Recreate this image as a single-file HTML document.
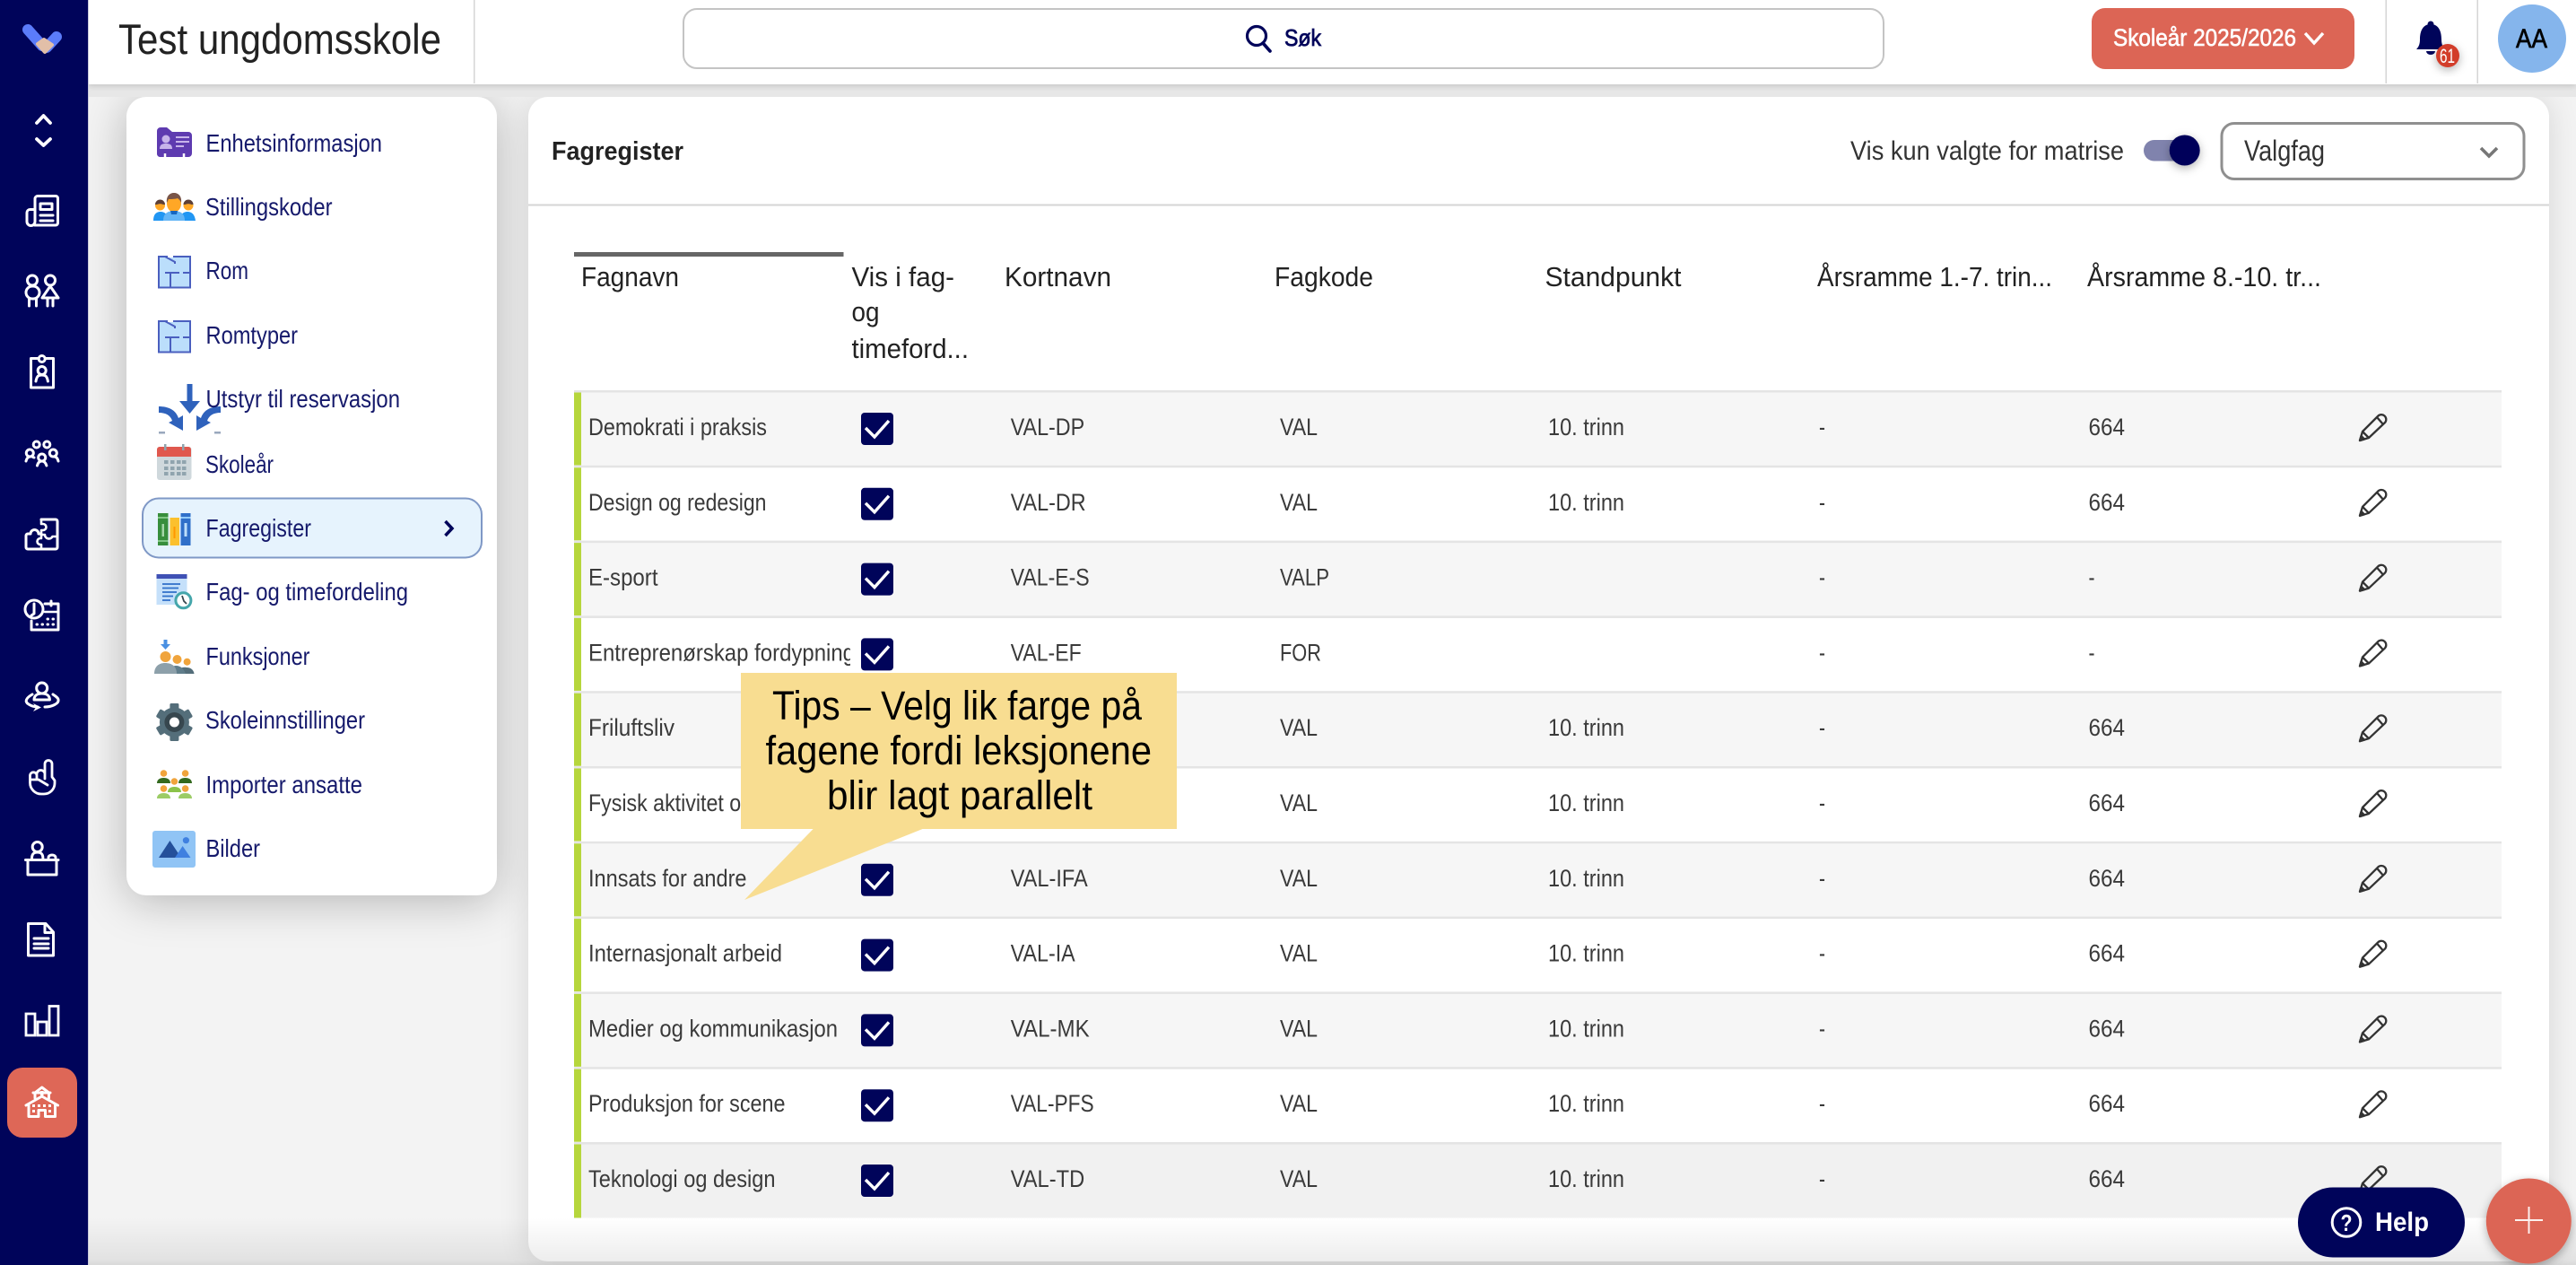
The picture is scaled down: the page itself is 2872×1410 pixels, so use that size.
<!DOCTYPE html>
<html lang="no">
<head>
<meta charset="utf-8">
<title>Fagregister</title>
<style>
html,body{margin:0;padding:0;width:2872px;height:1410px;overflow:hidden;background:#f3f3f3;font-family:"Liberation Sans",sans-serif}
.abs{position:absolute}
svg text{font-family:"Liberation Sans",sans-serif;white-space:pre}
.m{font-size:27.5px;fill:#15196b}
.h{font-size:30.5px;fill:#222}
.r{font-size:27px;fill:#3a3a3a}
.bg1{fill:#f6f6f6}
.sep{fill:#e4e4e4}
.bar{fill:#b6d63c}
.wi{fill:none;stroke:#fff;stroke-width:3;stroke-linecap:round;stroke-linejoin:round}
.wf{fill:#fff}
</style>
</head>
<body>
<div class="abs" style="left:141px;top:108px;width:413px;height:890px;background:#fff;border-radius:22px;box-shadow:0 6px 50px rgba(0,0,0,.26)"></div>
<div class="abs" style="left:589px;top:108px;width:2253px;height:1298px;background:#fff;border-radius:22px;box-shadow:0 0 34px rgba(0,0,0,.12)"></div>
<div class="abs" style="left:98px;top:94px;width:2774px;height:14px;background:#e7e7e7"></div>
<div class="abs" style="left:98px;top:0;width:2774px;height:94px;background:#fff;box-shadow:0 2px 6px rgba(0,0,0,.14)"></div>
<div class="abs" style="left:98px;top:1357px;width:2774px;height:53px;background:linear-gradient(rgba(0,0,0,0),rgba(0,0,0,.07) 90%,rgba(0,0,0,.11))"></div>
<div class="abs" style="left:0;top:0;width:98px;height:1410px;background:#00045a;border-right:1px solid #c9cadb"></div>

<svg class="abs" style="left:0;top:0" width="2872" height="1410" viewBox="0 0 2872 1410" xmlns="http://www.w3.org/2000/svg">
<defs>
<filter id="sh" x="-40%" y="-40%" width="180%" height="180%"><feDropShadow dx="0" dy="3" stdDeviation="5" flood-color="#000" flood-opacity=".3"/></filter>
<clipPath id="c1"><rect x="640" y="0" width="308" height="84"/></clipPath>
<g id="cb"><rect x="960" y="24" width="36" height="36" rx="4" fill="#00045a"/><path d="M965 41 L975 51 L991 33" fill="none" stroke="#fff" stroke-width="3.4"/></g>
<g id="pen" fill="none" stroke="#333" stroke-width="2.3" stroke-linejoin="round"><path d="M2631 55 L2634 45 L2651 28 a4.6 4.6 0 0 1 8 7 L2641 52 Z"/><path d="M2634 45 L2641 52"/><path d="M2650 29 L2657 37"/><path d="M2631 55 L2632.5 50 L2636 53.500 Z" fill="#333"/></g>
</defs>

<!-- header -->
<rect x="528" y="0" width="1.500" height="93" fill="#d5d5d5"/>
<text x="132" y="60" font-size="47" fill="#222" textLength="360" lengthAdjust="spacingAndGlyphs">Test ungdomsskole</text>
<rect x="762" y="10" width="1338" height="66" rx="15" fill="#fff" stroke="#c4c4c4" stroke-width="2"/>
<circle cx="1401" cy="40" r="10.500" fill="none" stroke="#00045a" stroke-width="3.200"/>
<path d="M1408 48 L1416 57" stroke="#00045a" stroke-width="3.600" stroke-linecap="round"/>
<text x="1432" y="51" font-size="26" fill="#00045a" stroke="#00045a" stroke-width=".8" textLength="41" lengthAdjust="spacingAndGlyphs">Søk</text>
<rect x="2332" y="9" width="293" height="68" rx="15" fill="#dc6555"/>
<text x="2356" y="51" font-size="26.500" fill="#fff" stroke="#fff" stroke-width=".6" textLength="204" lengthAdjust="spacingAndGlyphs">Skoleår 2025/2026</text>
<path d="M2570 37 L2580 48 L2590 37" fill="none" stroke="#fff" stroke-width="3.400"/>
<rect x="2659.500" y="0" width="1.500" height="93" fill="#d5d5d5"/>
<rect x="2761.500" y="0" width="1.500" height="93" fill="#d5d5d5"/>
<circle cx="2710" cy="27" r="3.500" fill="#00045a"/>
<path d="M2710 27 c-9 0-12 8-12 17 c0 6-2 9-4 11 h32 c-2-2-4-5-4-11 c0-9-3-17-12-17z" fill="#00045a"/>
<path d="M2705 57 h10 a5 4 0 0 1-10 0z" fill="#00045a"/>
<rect x="2716" y="49" width="26" height="26" rx="13" fill="#d23c2c" filter="url(#sh)"/>
<text x="2720" y="70" font-size="22" fill="#fff" textLength="17" lengthAdjust="spacingAndGlyphs">61</text>
<circle cx="2823" cy="43" r="38" fill="#85b5ec"/>
<text x="2805" y="53" font-size="30" fill="#000" stroke="#000" stroke-width=".7" textLength="35" lengthAdjust="spacingAndGlyphs">AA</text>

<!-- sidebar icons -->
<g fill="none" stroke-linecap="round" stroke-linejoin="round">
<path d="M31 33 L47 51" stroke="#5b7cfa" stroke-width="12"/>
<path d="M63 41 L52 53" stroke="#5b7cfa" stroke-width="12"/>
<path d="M42 49 L49 44 L58 50 L50 58 Z" fill="#e2bfa8" stroke="#e2bfa8" stroke-width="4"/>
</g>
<path d="M41 137 L48.500 129 L56 137 M41 155 L48.500 162 L56 155" fill="none" stroke="#fff" stroke-width="3.800" stroke-linecap="round" stroke-linejoin="round"/>
<g class="wi">
<path d="M38.500 251 H62 a2.500 2.500 0 0 0 2.500-2.500 V221 a2.500 2.500 0 0 0-2.500-2.500 H42 a3 3 0 0 0-3 3 V247 a4.500 4.500 0 0 1-9 0 V237 a3.500 3.500 0 0 1 3.500-3.500 H39"/>
<rect x="45" y="227" width="13" height="6.500"/><path d="M45 240 H59 M45 246 H59"/>
<circle cx="36" cy="312.500" r="5.500"/><rect x="29" y="319" width="15" height="14" rx="7"/><path d="M32.500 333 V341 M40.500 333 V341"/>
<circle cx="56" cy="312.500" r="5.500"/><path d="M56 319 L65 332 H47 Z"/><path d="M53 332 V341 M59 332 V341"/>
<path d="M42 399.500 H34.500 V432 H59.500 V399.500 H51"/><circle cx="46.700" cy="400" r="3.500"/><circle cx="46.700" cy="413" r="4.500"/><path d="M40 425 c1-6 3-7 6.700-7 s5.700 1 6.700 7"/>
<circle cx="40.700" cy="495.500" r="3.500"/><circle cx="52.300" cy="495.500" r="3.500"/><circle cx="33.300" cy="505" r="4"/><circle cx="59.300" cy="505" r="4"/><circle cx="46.700" cy="510" r="4"/>
<path d="M29 514 c1-4 3-5 4.500-5 M38 510 c-1 0-2-1-2-1 M65 514 c-1-4-3-5-4.500-5 M41.500 519 c1-4 3-5 5.200-5 s4 1 5.200 5"/>
<path d="M46 579 H62 a2 2 0 0 1 2 2 V610 a2 2 0 0 1-2 2 H31 a2 2 0 0 1-2-2 V597 a2 2 0 0 1 2-2 H34 a4.500 4.500 0 1 1 9 0 H46"/>
<path d="M46 579 V584 h2 a3.500 3.500 0 0 1 0 7 h-2 V600 h-1 a3.500 3.500 0 0 0 0 7 h1 V612 M46 596 H50 a4.500 4.500 0 0 0 8.500 2 H64" stroke-width="2.600"/>
<circle cx="38" cy="679" r="10"/><path d="M38 673 V684 L35 686"/>
<path d="M50 673 H65 V702 H35 V692"/><path d="M50 682 H65" stroke-width="2.500"/><path d="M57 670 V675"/>
<path d="M41 696 h.5 M47 696 h.5 M53 696 h.5 M59 696 h.5 M53 690 h.5 M59 690 h.5"/>
<circle cx="46.700" cy="767" r="6"/><path d="M38 780 c0-5 4-7 8.700-7 s8.700 2 8.700 7 Z"/>
<path d="M36 774 C29 778 27 782 32 785 C35 787 39 788 42 788"/>
<path d="M50 788 C58 788 66 784 65 780 C65 778 62 776 59 774"/>
<path d="M50 868 V851.500 a4 4 0 0 1 8 0 V866 l3 4 v3 a12 12 0 0 1-12 12 h-3 a12.500 12.500 0 0 1-12.500-12.500 V864 a3.800 3.800 0 0 1 7.500 0 V868 M41 863 a4.500 4.500 0 0 1 9 0 M33.500 869 H43 L53 875" stroke-width="2.800"/>
<circle cx="41.700" cy="944" r="5.500"/><path d="M35.500 957 c0-5 2-7 6.200-7 s6.200 2 6.200 7"/><path d="M54 956 c0-4 8-4 8 0"/>
<path d="M28.500 958.500 H65 M31 958.500 V975 H63 V958.500"/>
<path d="M31.500 1029.500 H51 L59.500 1039 V1065 H31.500 Z M50 1030 V1039.500 H59"/><path d="M38 1046 H54 M38 1052 H54 M38 1057 H54"/>
</g>
<path d="M37 784 L46 788.500 L37 793 L40 788.500 Z" fill="#fff"/>
<g fill="none" stroke="#fff" stroke-width="2.800"><rect x="29" y="1130" width="10" height="24"/><rect x="42" y="1139" width="10" height="15"/><rect x="55" y="1121.500" width="10" height="32.500"/></g>
<rect x="8" y="1190" width="78" height="78" rx="17" fill="#de6757"/>
<g class="wi" stroke-width="2.800"><path d="M29 1232 L46.700 1222 L64.500 1232"/><path d="M39 1224 V1218 L46.700 1212 L54.500 1218 V1224"/><path d="M37 1218 H56"/><path d="M32 1232 V1244.500 H43 V1237.500 H50.500 V1244.500 H61.500 V1232"/></g>
<g class="wf"><rect x="45" y="1216" width="3.500" height="5"/><rect x="36" y="1231" width="3" height="3"/><rect x="42" y="1231" width="3" height="3"/><rect x="48" y="1231" width="3" height="3"/><rect x="54" y="1231" width="3" height="3"/><rect x="36" y="1237" width="3" height="3"/><rect x="54" y="1237" width="3" height="3"/></g>

<!-- left menu selected -->
<rect x="159" y="555.500" width="378" height="66" rx="18" fill="#e6f3fd" stroke="#7f98c6" stroke-width="2"/>
<path d="M496.500 581 L504 589 L496.500 597" fill="none" stroke="#00045a" stroke-width="3.500"/>

<!-- menu icons -->
<path d="M175 146 a4 4 0 0 1 4-4 H186 L192 147 H210 a4 4 0 0 1 4 4 V171 a4 4 0 0 1-4 4 H178 a4 4 0 0 1-3-3 Z" fill="#5e3bb0"/>
<circle cx="185" cy="155" r="4.500" fill="#c7b4ea"/><path d="M178 166 c0-5 3-6 7-6 s7 1 7 6z" fill="#c7b4ea"/>
<path d="M196 153 H211 M196 158 H211 M196 163 H205" stroke="#c7b4ea" stroke-width="2"/>
<path d="M184 171 v5 M205 171 v5" stroke="#fff" stroke-width="2.500"/>

<path d="M171 246 c0-7 3-10 8-10 s8 3 9 10z M200 246 c1-7 4-10 9-10 s8 3 9 10z" fill="#2196f3"/>
<path d="M182 246 c0-8 5-11 12-11 s12 3 12 11 z" fill="#64b5f6"/>
<circle cx="178.500" cy="229" r="5.500" fill="#ffa726"/><circle cx="210" cy="229" r="5.500" fill="#ffa726"/>
<path d="M173 228 a5.500 5.500 0 0 1 11 0 h-2 c-2-1-5-1-7 0z M204.500 228 a5.500 5.500 0 0 1 11 0 h-2 c-2-1-5-1-7 0z" fill="#5d4037"/>
<ellipse cx="194" cy="227" rx="8" ry="9.500" fill="#ffa726"/>
<path d="M186 226 c-1-7 3-11 8-11 s9 4 8 11 c-1-3-3-4-4-5 c-3 1-8 1-10 1z" fill="#795548"/>
<path d="M190 235 h8 l-1 4 h-6z" fill="#1565c0"/>

<g id="room"><rect x="177" y="286" width="35" height="34.500" fill="#bbdefb" stroke="#4a5fbf" stroke-width="2"/>
<path d="M184 286 L195 292 V294 M194 286 H203 M184 304 H200 M204 304 H212 M190 304 V320" fill="none" stroke="#4a5fbf" stroke-width="2"/><rect x="187" y="284" width="6" height="3" fill="#fff"/></g>
<g transform="translate(0,72)"><rect x="177" y="286" width="35" height="34.500" fill="#bbdefb" stroke="#4a5fbf" stroke-width="2"/>
<path d="M184 286 L195 292 V294 M194 286 H203 M184 304 H200 M204 304 H212 M190 304 V320" fill="none" stroke="#4a5fbf" stroke-width="2"/><rect x="187" y="284" width="6" height="3" fill="#fff"/></g>

<path d="M208.500 428 h6 V447 h8.500 L211.500 461 L200 447 h8.500 Z" fill="#2f62bc"/>
<path d="M177 453 v7 c8 0 13 3 15 9 l-4 2 l16 9 l0-17 l-5 3 c-3-9-11-13-22-13z" fill="#2f62bc"/>
<path d="M246 453 v7 c-8 0-13 3-15 9 l4 2 l-16 9 l0-17 l5 3 c3-9 11-13 22-13z" fill="#2f62bc"/>
<rect x="177" y="481" width="7" height="2.500" fill="#9aa8bd"/><rect x="239" y="481" width="7" height="2.500" fill="#9aa8bd"/>

<rect x="175" y="498" width="38.500" height="37" rx="3" fill="#cfd8dc"/>
<path d="M175 509 V501 a3 3 0 0 1 3-3 H210 a3 3 0 0 1 3 3 V509 Z" fill="#e0584e"/>
<rect x="183" y="495" width="2.500" height="7" fill="#90a4ae"/><rect x="203" y="495" width="2.500" height="7" fill="#90a4ae"/>
<g fill="#90a4ae"><rect x="183" y="513" width="4.500" height="4"/><rect x="190" y="513" width="4.500" height="4"/><rect x="197" y="513" width="4.500" height="4"/><rect x="203" y="513" width="4.500" height="4"/><rect x="183" y="520" width="4.500" height="4"/><rect x="190" y="520" width="4.500" height="4"/><rect x="197" y="520" width="4.500" height="4"/><rect x="203" y="520" width="4.500" height="4"/><rect x="183" y="526" width="4.500" height="4"/><rect x="190" y="526" width="4.500" height="4"/><rect x="197" y="526" width="4.500" height="4"/><rect x="203" y="526" width="4.500" height="4"/></g>

<rect x="176" y="572" width="11.500" height="36" fill="#388e3c"/><rect x="180.500" y="584" width="2.500" height="14" fill="#a5d6a7"/><rect x="176" y="576" width="11.500" height="2" fill="#81c784"/><rect x="176" y="602" width="11.500" height="2" fill="#81c784"/>
<rect x="189.500" y="577" width="10.500" height="31" fill="#fbc02d"/><rect x="193.500" y="587" width="2" height="13" fill="#ff9800"/>
<rect x="201.500" y="572" width="11" height="36" fill="#2f6fc9"/><rect x="205.500" y="583" width="3" height="15" fill="#bbdefb"/><rect x="201.500" y="576" width="11" height="2" fill="#90caf9"/>

<rect x="174.500" y="640" width="34" height="34" fill="#c5e0fa"/><rect x="174.500" y="640" width="34" height="5" fill="#3f51b5"/>
<path d="M181 651 H201 M181 655.500 H199 M181 660 H197 M181 664.500 H193 M181 669 H190" stroke="#2f6fc9" stroke-width="1.700"/>
<circle cx="204.400" cy="669.300" r="8.500" fill="#fff" stroke="#45a6ab" stroke-width="3"/><path d="M203 664 L205 670 L208 673" fill="none" stroke="#37474f" stroke-width="1.800"/>

<path d="M182.500 713 h4 V718 h3.500 l-5.500 6 l-5.500-6 h3.500z" fill="#4a90e2"/>
<circle cx="184.500" cy="732" r="6" fill="#f0a43c"/><circle cx="197.500" cy="735" r="5" fill="#f0a43c"/><circle cx="208.600" cy="737.700" r="4" fill="#f0a43c"/>
<path d="M197 751 c1-5 5-8 11-7 c5 0 8 3 8.500 7z" fill="#546e7a"/>
<path d="M187 751 c1-5 5-9 9-9 c6 0 9 4 11 9z" fill="#607d8b"/>
<path d="M172 751 c0-8 5-12 12-12 c8 0 13 4 13 12z" fill="#8da0aa"/>

<g fill="#546e7a" transform="translate(194.400,805)">
<circle r="16.500"/>
<rect x="-5" y="-21" width="10" height="42" rx="1.500"/>
<rect x="-5" y="-21" width="10" height="42" rx="1.500" transform="rotate(60)"/>
<rect x="-5" y="-21" width="10" height="42" rx="1.500" transform="rotate(120)"/>
<circle r="11" fill="#37474f"/><circle r="5.500" fill="#fff"/>
</g>

<g fill="#f0a43c"><circle cx="182.500" cy="862" r="3.800"/><circle cx="206.600" cy="862" r="3.800"/><circle cx="194.400" cy="871" r="3.800"/><circle cx="182.500" cy="879" r="3.800"/><circle cx="206.600" cy="879" r="3.800"/></g>
<path d="M175 873 c0-4 3-6 7.500-6 s7.500 2 7.500 6z M199 873 c0-4 3-6 7.500-6 s7.500 2 7.500 6z" fill="#33691e"/>
<path d="M187 883 c0-4 3-6 7.500-6 s7.500 2 7.500 6z" fill="#8bc34a"/>
<path d="M175 890 c0-4 3-6 7.500-6 s7.500 2 7.500 6z M199 890 c0-4 3-6 7.500-6 s7.500 2 7.500 6z" fill="#9ccc65"/>

<rect x="170" y="926" width="48" height="41" rx="3" fill="#90c4f5"/>
<path d="M177 956 L189.400 937 L202 956 Z" fill="#24509a"/>
<path d="M195 956 L203.600 943 L212.500 956 Z" fill="#3f80e0"/>
<circle cx="207.400" cy="936.700" r="3.600" fill="#3f80e0"/>

<!-- menu text -->
<text class="m" x="229.500" y="169" textLength="196.500" lengthAdjust="spacingAndGlyphs">Enhetsinformasjon</text>
<text class="m" x="229" y="240" textLength="141.500" lengthAdjust="spacingAndGlyphs">Stillingskoder</text>
<text class="m" x="229.500" y="311" textLength="47.500" lengthAdjust="spacingAndGlyphs">Rom</text>
<text class="m" x="229.500" y="383" textLength="102.500" lengthAdjust="spacingAndGlyphs">Romtyper</text>
<text class="m" x="229.500" y="454" textLength="216.500" lengthAdjust="spacingAndGlyphs">Utstyr til reservasjon</text>
<text class="m" x="229" y="527" textLength="76" lengthAdjust="spacingAndGlyphs">Skoleår</text>
<text class="m" x="229.500" y="598" textLength="117.500" lengthAdjust="spacingAndGlyphs">Fagregister</text>
<text class="m" x="229.500" y="669" textLength="225.500" lengthAdjust="spacingAndGlyphs">Fag- og timefordeling</text>
<text class="m" x="229.500" y="741" textLength="116" lengthAdjust="spacingAndGlyphs">Funksjoner</text>
<text class="m" x="229" y="812" textLength="178" lengthAdjust="spacingAndGlyphs">Skoleinnstillinger</text>
<text class="m" x="229.500" y="884" textLength="174.500" lengthAdjust="spacingAndGlyphs">Importer ansatte</text>
<text class="m" x="229.500" y="955" textLength="60.500" lengthAdjust="spacingAndGlyphs">Bilder</text>

<!-- main panel header -->
<text x="615" y="178" font-size="29" font-weight="700" fill="#222" textLength="147" lengthAdjust="spacingAndGlyphs">Fagregister</text>
<text x="2063" y="178" font-size="29.500" fill="#333" textLength="305" lengthAdjust="spacingAndGlyphs">Vis kun valgte for matrise</text>
<rect x="2390" y="156" width="46" height="23.500" rx="11.700" fill="#8083ad"/>
<circle cx="2435.700" cy="167.500" r="17" fill="#00045a" filter="url(#sh)"/>
<rect x="2477" y="137.500" width="337" height="62" rx="14" fill="#fff" stroke="#8f8f8f" stroke-width="3"/>
<text x="2502" y="179" font-size="32" fill="#333" textLength="90" lengthAdjust="spacingAndGlyphs">Valgfag</text>
<path d="M2766 165 L2775 174 L2784 165" fill="none" stroke="#777" stroke-width="3.600"/>
<rect x="589" y="227.500" width="2253" height="2" fill="#d5d5d5"/>

<!-- table header -->
<rect x="640" y="281" width="300.500" height="5" fill="#666"/>
<text class="h" x="648" y="319" textLength="109" lengthAdjust="spacingAndGlyphs">Fagnavn</text>
<text class="h" x="949.500" y="319" textLength="114.500" lengthAdjust="spacingAndGlyphs">Vis i fag-</text>
<text class="h" x="949.500" y="358" textLength="31" lengthAdjust="spacingAndGlyphs">og</text>
<text class="h" x="949.500" y="399" textLength="130.500" lengthAdjust="spacingAndGlyphs">timeford...</text>
<text class="h" x="1120" y="319" textLength="119" lengthAdjust="spacingAndGlyphs">Kortnavn</text>
<text class="h" x="1421" y="319" textLength="110" lengthAdjust="spacingAndGlyphs">Fagkode</text>
<text class="h" x="1722.500" y="319" textLength="152" lengthAdjust="spacingAndGlyphs">Standpunkt</text>
<text class="h" x="2026" y="319" textLength="262" lengthAdjust="spacingAndGlyphs">Årsramme 1.-7. trin...</text>
<text class="h" x="2327" y="319" textLength="261" lengthAdjust="spacingAndGlyphs">Årsramme 8.-10. tr...</text>

<!-- rows -->
<g transform="translate(0,436)"><rect class="bg1" x="640" y="0" width="2149" height="84"/><rect class="sep" x="640" y="-1" width="2149" height="2.500"/><rect class="bar" x="640" y="1.500" width="8" height="81"/>
<text class="r" x="656" y="49" textLength="199" lengthAdjust="spacingAndGlyphs">Demokrati i praksis</text><use href="#cb"/>
<text class="r" x="1126.700" y="49" textLength="82.500" lengthAdjust="spacingAndGlyphs">VAL-DP</text><text class="r" x="1427" y="49" textLength="42" lengthAdjust="spacingAndGlyphs">VAL</text><text class="r" x="1726" y="49" textLength="85" lengthAdjust="spacingAndGlyphs">10. trinn</text><text class="r" x="2028" y="49" textLength="7" lengthAdjust="spacingAndGlyphs">-</text><text class="r" x="2328.500" y="49" textLength="40.500" lengthAdjust="spacingAndGlyphs">664</text><use href="#pen"/></g>

<g transform="translate(0,519.800)"><rect class="sep" x="640" y="-1" width="2149" height="2.500"/><rect class="bar" x="640" y="1.500" width="8" height="81"/>
<text class="r" x="656" y="49" textLength="198.500" lengthAdjust="spacingAndGlyphs">Design og redesign</text><use href="#cb"/>
<text class="r" x="1126.700" y="49" textLength="84" lengthAdjust="spacingAndGlyphs">VAL-DR</text><text class="r" x="1427" y="49" textLength="42" lengthAdjust="spacingAndGlyphs">VAL</text><text class="r" x="1726" y="49" textLength="85" lengthAdjust="spacingAndGlyphs">10. trinn</text><text class="r" x="2028" y="49" textLength="7" lengthAdjust="spacingAndGlyphs">-</text><text class="r" x="2328.500" y="49" textLength="40.500" lengthAdjust="spacingAndGlyphs">664</text><use href="#pen"/></g>

<g transform="translate(0,603.600)"><rect class="bg1" x="640" y="0" width="2149" height="84"/><rect class="sep" x="640" y="-1" width="2149" height="2.500"/><rect class="bar" x="640" y="1.500" width="8" height="81"/>
<text class="r" x="656" y="49" textLength="77.500" lengthAdjust="spacingAndGlyphs">E-sport</text><use href="#cb"/>
<text class="r" x="1126.700" y="49" textLength="88" lengthAdjust="spacingAndGlyphs">VAL-E-S</text><text class="r" x="1427" y="49" textLength="55" lengthAdjust="spacingAndGlyphs">VALP</text><text class="r" x="2028" y="49" textLength="7" lengthAdjust="spacingAndGlyphs">-</text><text class="r" x="2328.500" y="49" textLength="7" lengthAdjust="spacingAndGlyphs">-</text><use href="#pen"/></g>

<g transform="translate(0,687.400)"><rect class="sep" x="640" y="-1" width="2149" height="2.500"/><rect class="bar" x="640" y="1.500" width="8" height="81"/>
<g clip-path="url(#c1)"><text class="r" x="656" y="49" textLength="297" lengthAdjust="spacingAndGlyphs">Entreprenørskap fordypning</text></g><use href="#cb"/>
<text class="r" x="1126.700" y="49" textLength="79" lengthAdjust="spacingAndGlyphs">VAL-EF</text><text class="r" x="1427" y="49" textLength="46" lengthAdjust="spacingAndGlyphs">FOR</text><text class="r" x="2028" y="49" textLength="7" lengthAdjust="spacingAndGlyphs">-</text><text class="r" x="2328.500" y="49" textLength="7" lengthAdjust="spacingAndGlyphs">-</text><use href="#pen"/></g>

<g transform="translate(0,771.200)"><rect class="bg1" x="640" y="0" width="2149" height="84"/><rect class="sep" x="640" y="-1" width="2149" height="2.500"/><rect class="bar" x="640" y="1.500" width="8" height="81"/>
<text class="r" x="656" y="49" textLength="96" lengthAdjust="spacingAndGlyphs">Friluftsliv</text>
<text class="r" x="1427" y="49" textLength="42" lengthAdjust="spacingAndGlyphs">VAL</text><text class="r" x="1726" y="49" textLength="85" lengthAdjust="spacingAndGlyphs">10. trinn</text><text class="r" x="2028" y="49" textLength="7" lengthAdjust="spacingAndGlyphs">-</text><text class="r" x="2328.500" y="49" textLength="40.500" lengthAdjust="spacingAndGlyphs">664</text><use href="#pen"/></g>

<g transform="translate(0,855)"><rect class="sep" x="640" y="-1" width="2149" height="2.500"/><rect class="bar" x="640" y="1.500" width="8" height="81"/>
<text class="r" x="656" y="49" textLength="245" lengthAdjust="spacingAndGlyphs">Fysisk aktivitet og helse</text>
<text class="r" x="1427" y="49" textLength="42" lengthAdjust="spacingAndGlyphs">VAL</text><text class="r" x="1726" y="49" textLength="85" lengthAdjust="spacingAndGlyphs">10. trinn</text><text class="r" x="2028" y="49" textLength="7" lengthAdjust="spacingAndGlyphs">-</text><text class="r" x="2328.500" y="49" textLength="40.500" lengthAdjust="spacingAndGlyphs">664</text><use href="#pen"/></g>

<g transform="translate(0,938.800)"><rect class="bg1" x="640" y="0" width="2149" height="84"/><rect class="sep" x="640" y="-1" width="2149" height="2.500"/><rect class="bar" x="640" y="1.500" width="8" height="81"/>
<text class="r" x="656" y="49" textLength="176.500" lengthAdjust="spacingAndGlyphs">Innsats for andre</text><use href="#cb"/>
<text class="r" x="1126.700" y="49" textLength="86" lengthAdjust="spacingAndGlyphs">VAL-IFA</text><text class="r" x="1427" y="49" textLength="42" lengthAdjust="spacingAndGlyphs">VAL</text><text class="r" x="1726" y="49" textLength="85" lengthAdjust="spacingAndGlyphs">10. trinn</text><text class="r" x="2028" y="49" textLength="7" lengthAdjust="spacingAndGlyphs">-</text><text class="r" x="2328.500" y="49" textLength="40.500" lengthAdjust="spacingAndGlyphs">664</text><use href="#pen"/></g>

<g transform="translate(0,1022.600)"><rect class="sep" x="640" y="-1" width="2149" height="2.500"/><rect class="bar" x="640" y="1.500" width="8" height="81"/>
<text class="r" x="656" y="49" textLength="216" lengthAdjust="spacingAndGlyphs">Internasjonalt arbeid</text><use href="#cb"/>
<text class="r" x="1126.700" y="49" textLength="72" lengthAdjust="spacingAndGlyphs">VAL-IA</text><text class="r" x="1427" y="49" textLength="42" lengthAdjust="spacingAndGlyphs">VAL</text><text class="r" x="1726" y="49" textLength="85" lengthAdjust="spacingAndGlyphs">10. trinn</text><text class="r" x="2028" y="49" textLength="7" lengthAdjust="spacingAndGlyphs">-</text><text class="r" x="2328.500" y="49" textLength="40.500" lengthAdjust="spacingAndGlyphs">664</text><use href="#pen"/></g>

<g transform="translate(0,1106.400)"><rect class="bg1" x="640" y="0" width="2149" height="84"/><rect class="sep" x="640" y="-1" width="2149" height="2.500"/><rect class="bar" x="640" y="1.500" width="8" height="81"/>
<text class="r" x="656" y="49" textLength="278" lengthAdjust="spacingAndGlyphs">Medier og kommunikasjon</text><use href="#cb"/>
<text class="r" x="1126.700" y="49" textLength="88" lengthAdjust="spacingAndGlyphs">VAL-MK</text><text class="r" x="1427" y="49" textLength="42" lengthAdjust="spacingAndGlyphs">VAL</text><text class="r" x="1726" y="49" textLength="85" lengthAdjust="spacingAndGlyphs">10. trinn</text><text class="r" x="2028" y="49" textLength="7" lengthAdjust="spacingAndGlyphs">-</text><text class="r" x="2328.500" y="49" textLength="40.500" lengthAdjust="spacingAndGlyphs">664</text><use href="#pen"/></g>

<g transform="translate(0,1190.200)"><rect class="sep" x="640" y="-1" width="2149" height="2.500"/><rect class="bar" x="640" y="1.500" width="8" height="81"/>
<text class="r" x="656" y="49" textLength="219.500" lengthAdjust="spacingAndGlyphs">Produksjon for scene</text><use href="#cb"/>
<text class="r" x="1126.700" y="49" textLength="93" lengthAdjust="spacingAndGlyphs">VAL-PFS</text><text class="r" x="1427" y="49" textLength="42" lengthAdjust="spacingAndGlyphs">VAL</text><text class="r" x="1726" y="49" textLength="85" lengthAdjust="spacingAndGlyphs">10. trinn</text><text class="r" x="2028" y="49" textLength="7" lengthAdjust="spacingAndGlyphs">-</text><text class="r" x="2328.500" y="49" textLength="40.500" lengthAdjust="spacingAndGlyphs">664</text><use href="#pen"/></g>

<g transform="translate(0,1274)"><rect x="640" y="0" width="2149" height="83.500" fill="#f1f1f1"/><rect class="sep" x="640" y="-1" width="2149" height="2.500"/><rect class="bar" x="640" y="1.500" width="8" height="82"/>
<text class="r" x="656" y="49" textLength="208.500" lengthAdjust="spacingAndGlyphs">Teknologi og design</text><use href="#cb"/>
<text class="r" x="1126.700" y="49" textLength="82.500" lengthAdjust="spacingAndGlyphs">VAL-TD</text><text class="r" x="1427" y="49" textLength="42" lengthAdjust="spacingAndGlyphs">VAL</text><text class="r" x="1726" y="49" textLength="85" lengthAdjust="spacingAndGlyphs">10. trinn</text><text class="r" x="2028" y="49" textLength="7" lengthAdjust="spacingAndGlyphs">-</text><text class="r" x="2328.500" y="49" textLength="40.500" lengthAdjust="spacingAndGlyphs">664</text><use href="#pen"/></g>

<!-- tooltip -->
<path d="M826 750 H1312 V924 H1028.500 L830 1003 L906.600 924 H826 Z" fill="#f8dd91"/>
<text x="861" y="802" font-size="45" fill="#000" textLength="412" lengthAdjust="spacingAndGlyphs">Tips – Velg lik farge på</text>
<text x="853.500" y="852" font-size="45" fill="#000" textLength="430.500" lengthAdjust="spacingAndGlyphs">fagene fordi leksjonene</text>
<text x="922" y="902" font-size="45" fill="#000" textLength="296" lengthAdjust="spacingAndGlyphs">blir lagt parallelt</text>

<!-- floating -->
<rect x="2562" y="1323.500" width="186" height="78" rx="39" fill="#00045a"/>
<circle cx="2616" cy="1362.500" r="15.800" fill="none" stroke="#fff" stroke-width="3"/>
<text x="2609.500" y="1372" font-size="26" font-weight="700" fill="#fff" textLength="13" lengthAdjust="spacingAndGlyphs">?</text>
<text x="2648" y="1372" font-size="30" font-weight="700" fill="#fff" textLength="60" lengthAdjust="spacingAndGlyphs">Help</text>
<circle cx="2819.300" cy="1361" r="47.500" fill="#dc6555" filter="url(#sh)"/>
<path d="M2804 1360 H2835 M2819.500 1345 V1375" stroke="#fff" stroke-width="2" fill="none" opacity=".9"/>
</svg>
</body>
</html>
